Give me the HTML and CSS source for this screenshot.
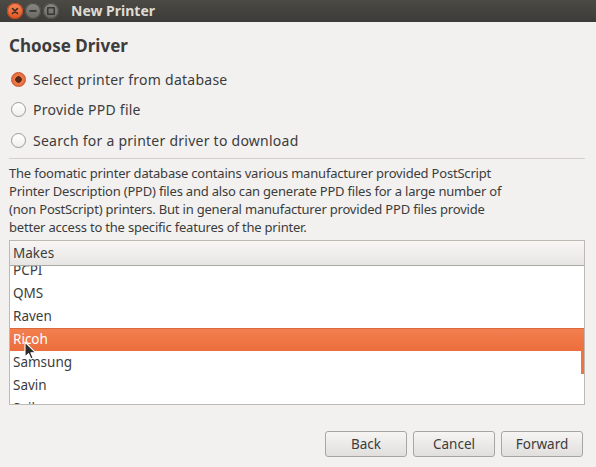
FILE: index.html
```html
<!DOCTYPE html>
<html>
<head>
<meta charset="utf-8">
<link rel="stylesheet" href="styles.css">
</head>
<body>
<div class="window">
  <div class="titlebar">
    <div class="wbuttons">
      <span class="wb close"><svg width="16" height="16" viewBox="0 0 16 16"><path d="M5.5 5.5 L10.5 10.5 M10.5 5.5 L5.5 10.5" stroke="#3a2a22" stroke-width="1.6" stroke-linecap="round"/></svg></span>
      <span class="wb"><svg width="16" height="16" viewBox="0 0 16 16"><path d="M4.5 8 H11.5" stroke="#2f2e2b" stroke-width="1.6"/></svg></span>
      <span class="wb"><svg width="16" height="16" viewBox="0 0 16 16"><rect x="4.8" y="4.8" width="6.4" height="6.4" fill="none" stroke="#2f2e2b" stroke-width="1.3"/></svg></span>
    </div>
    <div class="title">New Printer</div>
  </div>
  <div class="content">
    <h1 class="heading">Choose Driver</h1>
    <div class="radios">
      <label class="radio-row"><span class="radio checked"></span>Select printer from database</label>
      <label class="radio-row"><span class="radio"></span>Provide PPD file</label>
      <label class="radio-row"><span class="radio"></span>Search for a printer driver to download</label>
    </div>
    <div class="sep"></div>
    <p class="desc">The foomatic printer database contains various manufacturer provided PostScript<br>Printer Description (PPD) files and also can generate PPD files for a large number of<br>(non PostScript) printers. But in general manufacturer provided PPD files provide<br>better access to the specific features of the printer.</p>
    <div class="listbox">
      <div class="list-header">Makes</div>
      <div class="list-body">
        <div class="rows">
          <div class="row">PCPI</div>
          <div class="row">QMS</div>
          <div class="row">Raven</div>
          <div class="row selected">Ricoh</div>
          <div class="row">Samsung</div>
          <div class="row">Savin</div>
          <div class="row">Sailor</div>
        </div>
        <div class="scroll-indicator"></div>
        <svg class="cursor" width="13" height="20" viewBox="0 0 13 20"><path d="M1 1 L1 16 L4.6 12.6 L7 18 L9.2 17 L6.9 11.8 L11.8 11.8 Z" fill="#2b2b2b" stroke="#ffffff" stroke-width="1.1" stroke-linejoin="round"/></svg>
      </div>
    </div>
    <div class="buttons">
      <button class="btn">Back</button>
      <button class="btn">Cancel</button>
      <button class="btn">Forward</button>
    </div>
  </div>
</div>
</body>
</html>
```

FILE: styles.css
```css
* { box-sizing: border-box; }
html, body {
  margin: 0;
  padding: 0;
  background: #f2f1f0;
  font-family: "Noto Sans", "Open Sans", sans-serif;
  color: #3c3c3c;
}
.window {
  width: 596px;
  height: 467px;
  overflow: hidden;
}
.titlebar {
  height: 22px;
  background: linear-gradient(#4b4a45, #3c3b37);
  display: flex;
  align-items: center;
  padding-left: 7px;
}
.wbuttons {
  display: flex;
  gap: 2px;
}
.wb {
  width: 16px;
  height: 16px;
  border-radius: 50%;
  background: linear-gradient(#8a8883, #6a6863);
  box-shadow: inset 0 0 0 1px #4a4944;
  display: flex;
}
.wb.close {
  background: linear-gradient(#f58a5c, #df5321);
  box-shadow: inset 0 0 0 1px #b8461f;
}
.title {
  margin-left: 12px;
  font-weight: bold;
  font-size: 14px;
  color: #dfdbd2;
  line-height: 22px;
}
.content {
  padding: 0 11px 0 9px;
}
.heading {
  margin: 14px 0 0 0;
  font-size: 17px;
  line-height: 20px;
  font-weight: bold;
  color: #3c3c3c;
}
.radios {
  margin-top: 8px;
}
.radio-row {
  height: 30.5px;
  display: flex;
  align-items: center;
  font-size: 14px;
  letter-spacing: 0.25px;
  padding-left: 2px;
}
.radio {
  width: 15px;
  height: 15px;
  border-radius: 50%;
  border: 1px solid #9d9a95;
  background: linear-gradient(#ffffff, #f0efee);
  margin-right: 7px;
  display: inline-block;
  flex-shrink: 0;
}
.radio.checked {
  border-color: #c9532a;
  background: radial-gradient(circle, #5a2817 0 3px, #f07a4a 3.5px, #e05f2e 100%);
}
.sep {
  margin-top: 2.5px;
  height: 1px;
  background: #d4d1cc;
}
.desc {
  margin: 5px 0 0 0;
  font-size: 13px;
  letter-spacing: -0.2px;
  line-height: 18px;
  white-space: nowrap;
}
.listbox {
  margin-top: 4px;
  border: 1px solid #bdbab4;
  height: 165px;
  background: #ffffff;
  display: flex;
  flex-direction: column;
}
.list-header {
  height: 25px;
  background: linear-gradient(#f7f6f5, #e7e6e4);
  border-bottom: 1px solid #a9a7a2;
  font-size: 13.5px;
  line-height: 24px;
  padding-left: 3px;
}
.list-body {
  flex: 1;
  position: relative;
  overflow: hidden;
}
.rows {
  margin-top: -7px;
}
.row {
  height: 23px;
  line-height: 23px;
  font-size: 13.5px;
  padding-left: 3px;
}
.row.selected {
  background: linear-gradient(#f37f4f, #eb6e3c);
  border-top: 1px solid #d9683b;
  color: #ffffff;
  line-height: 21px;
}
.scroll-indicator {
  position: absolute;
  right: 0;
  top: 77px;
  width: 3px;
  height: 31px;
  background: #ee7343;
}
.cursor {
  position: absolute;
  left: 14px;
  top: 75px;
}
.buttons {
  margin-top: 26px;
  display: flex;
  justify-content: flex-end;
  gap: 6px;
  padding-right: 2px;
}
.btn {
  width: 82px;
  height: 26px;
  border: 1px solid #a8a6a1;
  border-radius: 3px;
  background: linear-gradient(#f6f5f4, #e1dfdc);
  font-family: "Noto Sans", "Open Sans", sans-serif;
  font-size: 13.5px;
  color: #3c3c3c;
  padding: 0;
}
```
